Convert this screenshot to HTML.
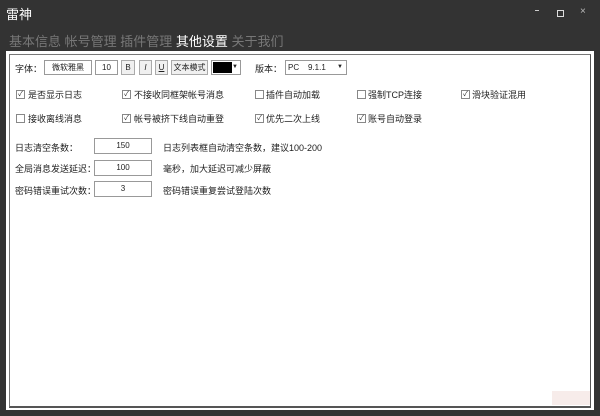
<!DOCTYPE html><html><head><meta charset="utf-8"><style>
body{margin:0;width:600px;height:416px;background:#333;position:relative;overflow:hidden;font-family:"Liberation Sans","Noto Sans CJK SC",sans-serif;font-size:9px;color:#222}
.a{position:absolute;white-space:nowrap}
.box{position:absolute;border:1px solid #999;background:#fff;box-sizing:border-box;text-align:center;font-size:8px;line-height:13px}
.btn{position:absolute;border:1px solid #aaa;background:#f0f0f0;box-sizing:border-box;text-align:center;font-size:8px;line-height:13px}
.cb{position:absolute;width:7px;height:7px;border:1px solid #888;background:#fff;font-size:7px;line-height:7px;text-align:center}
</style></head><body>
<div class="a" style="left:6px;top:4px;color:#fff;font-size:13px">雷神</div>
<div class="a" style="left:535px;top:10px;width:4px;height:1px;background:#ccc"></div>
<div class="a" style="left:557px;top:10px;width:5px;height:5px;border:1.5px solid #ddd"></div>
<div class="a" style="left:580px;top:6px;color:#bbb;font-size:10px">×</div>
<div class="a" style="left:9px;top:31px;font-size:13px;color:#777">基本信息 帐号管理 插件管理 <span style="color:#fff">其他设置</span> 关于我们</div>
<div class="a" style="left:6px;top:51px;width:588px;height:359px;background:#fff"></div>
<div class="a" style="left:9px;top:54px;width:580px;height:351px;border:1px solid #777;border-right-color:#555;border-bottom:2px solid #555"></div>
<div class="a" style="left:15px;top:62px">字体：</div>
<div class="box" style="left:44px;top:60px;width:48px;height:15px">微软雅黑</div>
<div class="box" style="left:95px;top:60px;width:23px;height:15px">10</div>
<div class="btn" style="left:121px;top:60px;width:14px;height:15px">B</div>
<div class="btn" style="left:139px;top:60px;width:13px;height:15px"><i>I</i></div>
<div class="btn" style="left:155px;top:60px;width:13px;height:15px"><u>U</u></div>
<div class="btn" style="left:171px;top:60px;width:37px;height:15px">文本模式</div>
<div class="box" style="left:211px;top:60px;width:30px;height:15px"><div style="position:absolute;left:1px;top:1px;width:19px;height:11px;background:#000"></div><div style="position:absolute;right:2px;top:0;font-size:6px">▼</div></div>
<div class="a" style="left:255px;top:62px">版本：</div>
<div class="box" style="left:285px;top:60px;width:62px;height:15px;text-align:left;padding-left:2px">PC &nbsp; &nbsp;9.1.1<span style="position:absolute;right:3px;font-size:6px">▼</span></div>
<div class="cb" style="left:16px;top:90px">✓</div><div class="a" style="left:28px;top:88px">是否显示日志</div>
<div class="cb" style="left:122px;top:90px">✓</div><div class="a" style="left:134px;top:88px">不接收同框架帐号消息</div>
<div class="cb" style="left:255px;top:90px"></div><div class="a" style="left:266px;top:88px">插件自动加载</div>
<div class="cb" style="left:357px;top:90px"></div><div class="a" style="left:368px;top:88px">强制TCP连接</div>
<div class="cb" style="left:461px;top:90px">✓</div><div class="a" style="left:472px;top:88px">滑块验证混用</div>
<div class="cb" style="left:16px;top:114px"></div><div class="a" style="left:28px;top:112px">接收离线消息</div>
<div class="cb" style="left:122px;top:114px">✓</div><div class="a" style="left:134px;top:112px">帐号被挤下线自动重登</div>
<div class="cb" style="left:255px;top:114px">✓</div><div class="a" style="left:266px;top:112px">优先二次上线</div>
<div class="cb" style="left:357px;top:114px">✓</div><div class="a" style="left:368px;top:112px">账号自动登录</div>
<div class="a" style="left:15px;top:141px">日志清空条数：</div><div class="box" style="left:94px;top:138px;width:58px;height:16px;line-height:14px">150</div><div class="a" style="left:163px;top:141px">日志列表框自动清空条数，建议100-200</div>
<div class="a" style="left:15px;top:162px">全局消息发送延迟：</div><div class="box" style="left:94px;top:160px;width:58px;height:16px;line-height:14px">100</div><div class="a" style="left:163px;top:162px">毫秒，加大延迟可减少屏蔽</div>
<div class="a" style="left:15px;top:184px">密码错误重试次数：</div><div class="box" style="left:94px;top:181px;width:58px;height:16px;line-height:14px">3</div><div class="a" style="left:163px;top:184px">密码错误重复尝试登陆次数</div>
<div class="a" style="left:552px;top:391px;width:38px;height:14px;background:#f7ecea"></div>
</body></html>
